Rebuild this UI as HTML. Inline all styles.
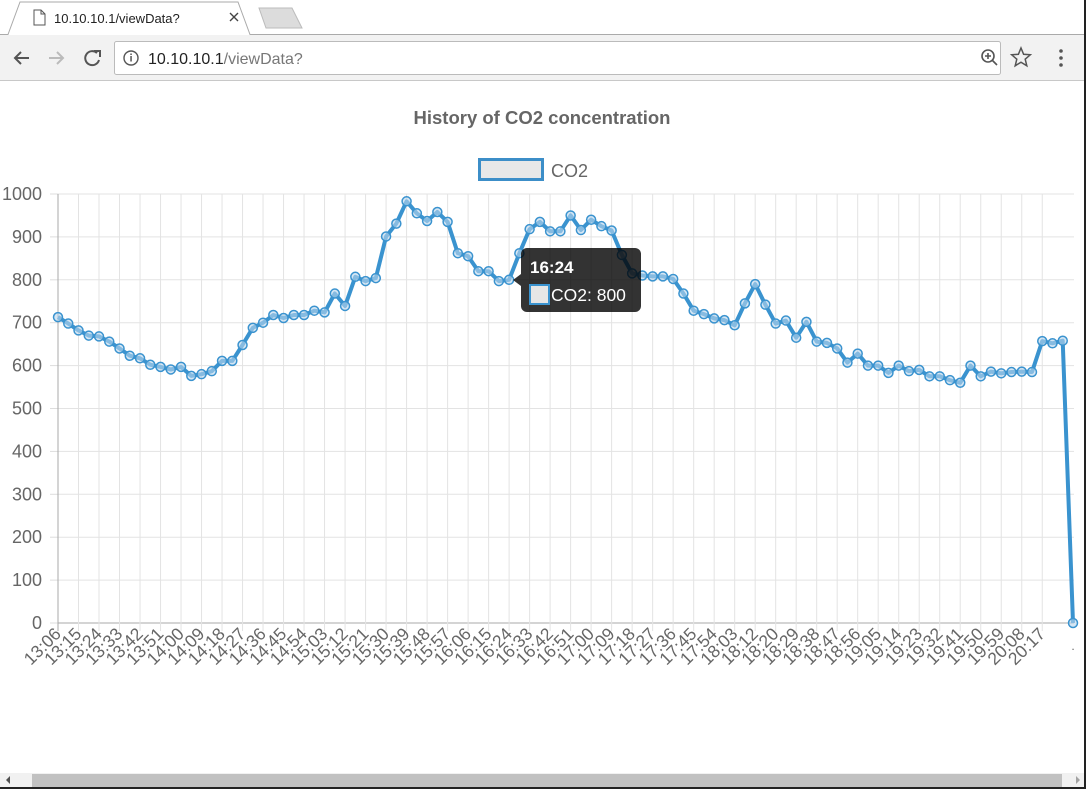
<!DOCTYPE html>
<html style="overflow:hidden"><head><meta charset="utf-8"><style>
html,body{margin:0;width:1086px;height:789px;overflow:hidden}
body{background:#fff;font-family:"Liberation Sans",Arial,sans-serif;position:relative}
.abs{position:absolute}
</style></head><body>
<svg class="abs" style="left:0;top:0" width="1086" height="82">
<rect x="0" y="0" width="1086" height="35" fill="#fff"/>
<path d="M0,34.5 L8,34.5 L20,2 L238,2 L250,34.5 L1086,34.5" fill="none" stroke="#aaa"/>
<rect x="0" y="35" width="1086" height="46" fill="#f2f2f2"/>
<line x1="0" y1="80.5" x2="1086" y2="80.5" stroke="#c8c8c8"/>
<path d="M259,8 L292,8 L302,28 L266,28 Z" fill="#dcdcdc" stroke="#bbb"/>
<path d="M34,10 h7 l4,4 v11 h-11 z M41,10 v4 h4" fill="none" stroke="#555" stroke-width="1"/>
<path d="M230,13 l8,8 M238,13 l-8,8" stroke="#444" stroke-width="1.4"/>
<rect x="114.5" y="41.5" width="886" height="33" rx="2" fill="#fff" stroke="#bbb"/>
<path d="M29,58 H15 M21,52 l-6,6 6,6" fill="none" stroke="#555" stroke-width="2"/>
<path d="M49,58 H63 M57,52 l6,6 -6,6" fill="none" stroke="#bbb" stroke-width="2"/>
<path d="M97,53 A7,7 0 1 0 99,60" fill="none" stroke="#555" stroke-width="2"/><path d="M94,51 h6 v6" fill="none" stroke="#555" stroke-width="2"/>
<circle cx="131" cy="58" r="7" fill="none" stroke="#555" stroke-width="1.4"/><rect x="130.3" y="56" width="1.5" height="5.5" fill="#555"/><rect x="130.3" y="53.5" width="1.5" height="1.5" fill="#555"/>
<circle cx="988" cy="56" r="6" fill="none" stroke="#555" stroke-width="1.6"/><path d="M992,60 l5,5 M985,56 h6 M988,53 v6" stroke="#555" stroke-width="1.6"/>
<path d="M1021,48 l2.6,6.3 6.7,.5 -5.1,4.4 1.6,6.6 -5.8,-3.6 -5.8,3.6 1.6,-6.6 -5.1,-4.4 6.7,-.5 z" fill="none" stroke="#555" stroke-width="1.5"/>
<circle cx="1061" cy="51" r="1.8" fill="#555"/><circle cx="1061" cy="58" r="1.8" fill="#555"/><circle cx="1061" cy="65" r="1.8" fill="#555"/>
<text x="54" y="23" font-size="13" fill="#222">10.10.10.1/viewData?</text>
<text x="148" y="64" font-size="16" fill="#222">10.10.10.1<tspan fill="#777">/viewData?</tspan></text>
</svg>
<svg id="c" class="abs" style="left:0;top:81px" width="1084" height="692"></svg>
<div class="abs" style="left:0;top:773px;width:1084px;height:14px;background:#f1f1f1"></div>
<div class="abs" style="left:32px;top:774px;width:1030px;height:13px;background:#c1c1c1"></div>
<svg class="abs" style="left:0;top:773px" width="1084" height="14"><path d="M6,7 l4,-4 v8z" fill="#505050"/><path d="M1076,3 l4,4 -4,4z" fill="#a3a3a3"/></svg>
<div class="abs" style="left:0;top:787px;width:1086px;height:2px;background:#222"></div>
<div class="abs" style="left:1084px;top:0;width:2px;height:789px;background:#222"></div>
<script>
var v=[713,698,682,670,668,656,640,623,617,602,597,591,597,576,580,587,611,611,648,688,700,718,711,718,718,728,724,768,739,807,797,804,901,931,983,955,937,958,935,862,855,820,820,797,800,862,918,935,913,913,950,916,940,925,915,858,815,810,808,808,802,768,728,720,710,706,694,745,790,742,698,705,665,702,656,653,640,607,628,600,600,583,600,587,590,575,575,566,560,600,575,586,582,585,586,585,657,652,658,0];
var L="13:06 13:15 13:24 13:33 13:42 13:51 14:00 14:09 14:18 14:27 14:36 14:45 14:54 15:03 15:12 15:21 15:30 15:39 15:48 15:57 16:06 16:15 16:24 16:33 16:42 16:51 17:00 17:09 17:18 17:27 17:36 17:45 17:54 18:03 18:12 18:20 18:29 18:38 18:47 18:56 19:05 19:14 19:23 19:32 19:41 19:50 19:59 20:08 20:17".split(' ');
var N=v.length,x0=58,x1=1073,dx=(x1-x0)/(N-1),y0=542,ys=429/1000;
var s='',o=-81;
function X(i){return x0+i*dx}function Y(a){return y0-a*ys}
s+='<text x="542" y="'+(124+o)+'" text-anchor="middle" font-size="18.5" font-weight="bold" fill="#666">History of CO2 concentration</text>';
s+='<rect x="479.5" y="'+(159.5+o)+'" width="63" height="20" fill="#e8e8e8" stroke="#3c8ec8" stroke-width="3"/>';
s+='<text x="551" y="'+(177+o)+'" font-size="18" fill="#666">CO2</text>';
for(var k=0;k<=10;k++){var y=Y(k*100);s+='<line x1="'+(k?58:50)+'" x2="1074" y1="'+y+'" y2="'+y+'" stroke="'+(k?'#e3e3e3':'#aaa')+'"/>';
s+='<line x1="50" x2="58" y1="'+y+'" y2="'+y+'" stroke="#ddd"/>';
s+='<text x="42" y="'+(y+6)+'" text-anchor="end" font-size="18" fill="#666">'+(k*100)+'</text>';}
for(var i=0;i<N;i+=2){var x=X(i);if(i<98){s+='<line x1="'+x+'" x2="'+x+'" y1="'+Y(1000)+'" y2="'+(y0+8)+'" stroke="'+(i?'#e3e3e3':'#aaa')+'"/>';
s+='<text transform="translate('+(x+4)+','+(y0+12)+') rotate(-45)" text-anchor="end" font-size="17.5" fill="#666">'+L[i/2]+'</text>';}}
s+='<text x="1073" y="'+(y0+27)+'" text-anchor="middle" font-size="12" fill="#666">.</text>';
var p='';for(var i=0;i<N;i++)p+=(i?'L':'M')+X(i).toFixed(1)+','+Y(v[i]).toFixed(1);
s+='<path d="'+p+'" fill="none" stroke="#3a93cf" stroke-width="4" stroke-linejoin="round"/>';
for(var i=0;i<N;i++)s+='<circle cx="'+X(i)+'" cy="'+Y(v[i])+'" r="4.5" fill="#b9d6ec" fill-opacity=".6" stroke="#3a93cf" stroke-width="1.5"/>';
s+='<path d="M513,'+(280+o)+' l8,-6 v12z" fill="rgba(0,0,0,.8)"/><rect x="521" y="'+(248+o)+'" width="120" height="64" rx="6" fill="rgba(0,0,0,.8)"/>';
s+='<text x="530" y="'+(273+o)+'" font-size="17" font-weight="bold" fill="#fff">16:24</text>';
s+='<rect x="530" y="'+(285+o)+'" width="19" height="19" fill="#e6e6e6" stroke="#3a93cf" stroke-width="2"/>';
s+='<text x="551" y="'+(301+o)+'" font-size="17.5" fill="#fff">CO2: 800</text>';
document.getElementById('c').innerHTML=s;
</script>
</body></html>
